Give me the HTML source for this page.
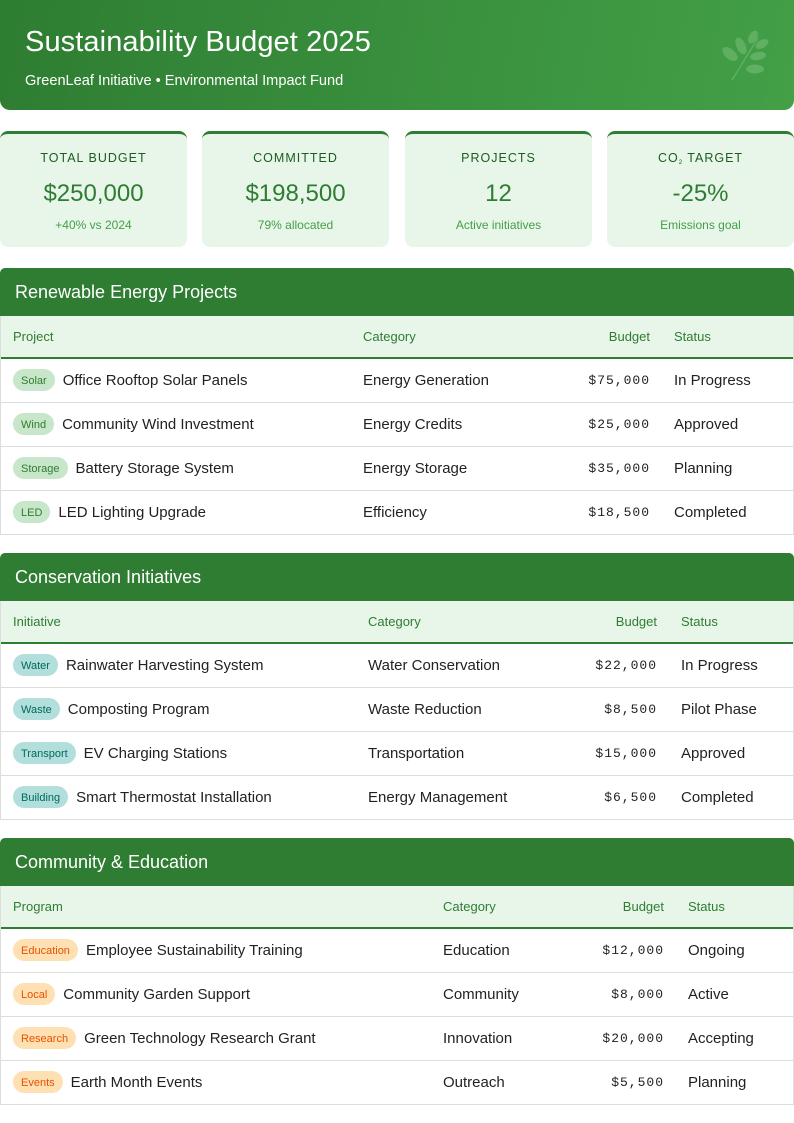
<!DOCTYPE html>
<html><head><meta charset="utf-8"><style>
*{box-sizing:border-box;margin:0;padding:0}
body{width:794px;height:1123px;background:#fff;font-family:"Liberation Sans",sans-serif;color:#222;position:relative;overflow:hidden}
.hdr{position:absolute;left:0;top:0;width:794px;height:110px;background:linear-gradient(100deg,#2e7d32,#43a047);border-radius:0 0 10px 10px;color:#fff}
.hdr h1{position:absolute;left:25px;top:26px;font-size:29px;font-weight:normal;letter-spacing:0.1px}
.hdr p{position:absolute;left:25px;top:73px;font-size:14.6px}
.leaf{position:absolute;left:718px;top:26px;opacity:.3}
.card{position:absolute;top:131px;width:187px;height:116px;background:#e8f5e9;border-top:3px solid #2e7d32;border-radius:8px;text-align:center}
.card .l{margin-top:16px;height:16px;font-size:12.5px;letter-spacing:1px;color:#1b5e20;line-height:16px}
.card .l sub{font-size:6px;line-height:0;vertical-align:-2px}
.card .v{margin-top:14px;font-size:24px;line-height:28px;color:#2e7d32}
.card .s{margin-top:10px;font-size:12px;color:#43a047}
.sec{position:absolute;left:0;width:794px;border:1px solid #ddd;border-top:none;border-radius:6px 6px 0 0}
.sh{height:48px;background:#2e7d32;color:#fff;font-size:18px;padding:14px 15px 0;border-radius:5px 5px 0 0;margin:0 -1px}
table{width:100%;border-collapse:collapse;table-layout:fixed}
th{height:42px;background:#e8f5e9;color:#2e7d32;font-weight:normal;font-size:13px;text-align:left;border-bottom:2px solid #2e7d32;padding:0 12px}
td{height:44px;font-size:15px;padding:0 12px;border-bottom:1px solid #ddd}
tr:last-child td{border-bottom:none}
.r{text-align:right}
td.r{font-family:"Liberation Mono",monospace;font-size:13px;letter-spacing:1px}
.f{display:flex;align-items:center;white-space:nowrap}
.b{display:inline-block;height:22px;line-height:25px;padding:0 8px;border-radius:11px;font-size:11px;margin-right:8px}
.g{background:#c8e6c9;color:#2e7d32}.t{background:#b2dfdb;color:#00695c}.o{background:#ffe0b2;color:#e65100}
</style></head><body>
<div class="hdr"><h1>Sustainability Budget 2025</h1><p>GreenLeaf Initiative • Environmental Impact Fund</p>
<svg class="leaf" width="56" height="56" viewBox="0 0 56 56"><path d="M14 54 L40 12" stroke="#a5d6a7" stroke-width="1.5" fill="none"/><g fill="#a5d6a7"><ellipse cx="12" cy="28" rx="9" ry="5" transform="rotate(40 12 28)"/><ellipse cx="23" cy="20" rx="9" ry="4.5" transform="rotate(65 23 20)"/><ellipse cx="35" cy="11" rx="7" ry="4" transform="rotate(-60 35 11)"/><ellipse cx="44" cy="18" rx="7" ry="4" transform="rotate(-30 44 18)"/><ellipse cx="40" cy="30" rx="8" ry="4" transform="rotate(-10 40 30)"/><ellipse cx="37" cy="43" rx="9" ry="4.5"/></g></svg></div>
<div class="card" style="left:0"><div class="l">TOTAL BUDGET</div><div class="v">$250,000</div><div class="s">+40% vs 2024</div></div>
<div class="card" style="left:202px"><div class="l">COMMITTED</div><div class="v">$198,500</div><div class="s">79% allocated</div></div>
<div class="card" style="left:405px"><div class="l">PROJECTS</div><div class="v">12</div><div class="s">Active initiatives</div></div>
<div class="card" style="left:607px"><div class="l">CO<sub>2</sub> TARGET</div><div class="v">-25%</div><div class="s">Emissions goal</div></div>

<div class="sec" style="top:268px"><div class="sh">Renewable Energy Projects</div>
<table><colgroup><col style="width:350px"><col style="width:210px"><col style="width:101px"><col></colgroup>
<tr><th>Project</th><th>Category</th><th class="r">Budget</th><th>Status</th></tr>
<tr><td><div class="f"><span class="b g">Solar</span>Office Rooftop Solar Panels</div></td><td>Energy Generation</td><td class="r">$75,000</td><td>In Progress</td></tr>
<tr><td><div class="f"><span class="b g">Wind</span>Community Wind Investment</div></td><td>Energy Credits</td><td class="r">$25,000</td><td>Approved</td></tr>
<tr><td><div class="f"><span class="b g">Storage</span>Battery Storage System</div></td><td>Energy Storage</td><td class="r">$35,000</td><td>Planning</td></tr>
<tr><td><div class="f"><span class="b g">LED</span>LED Lighting Upgrade</div></td><td>Efficiency</td><td class="r">$18,500</td><td>Completed</td></tr>
</table></div>

<div class="sec" style="top:553px"><div class="sh">Conservation Initiatives</div>
<table><colgroup><col style="width:355px"><col style="width:210px"><col style="width:103px"><col></colgroup>
<tr><th>Initiative</th><th>Category</th><th class="r">Budget</th><th>Status</th></tr>
<tr><td><div class="f"><span class="b t">Water</span>Rainwater Harvesting System</div></td><td>Water Conservation</td><td class="r">$22,000</td><td>In Progress</td></tr>
<tr><td><div class="f"><span class="b t">Waste</span>Composting Program</div></td><td>Waste Reduction</td><td class="r">$8,500</td><td>Pilot Phase</td></tr>
<tr><td><div class="f"><span class="b t">Transport</span>EV Charging Stations</div></td><td>Transportation</td><td class="r">$15,000</td><td>Approved</td></tr>
<tr><td><div class="f"><span class="b t">Building</span>Smart Thermostat Installation</div></td><td>Energy Management</td><td class="r">$6,500</td><td>Completed</td></tr>
</table></div>

<div class="sec" style="top:838px"><div class="sh">Community &amp; Education</div>
<table><colgroup><col style="width:430px"><col style="width:140px"><col style="width:105px"><col></colgroup>
<tr><th>Program</th><th>Category</th><th class="r">Budget</th><th>Status</th></tr>
<tr><td><div class="f"><span class="b o">Education</span>Employee Sustainability Training</div></td><td>Education</td><td class="r">$12,000</td><td>Ongoing</td></tr>
<tr><td><div class="f"><span class="b o">Local</span>Community Garden Support</div></td><td>Community</td><td class="r">$8,000</td><td>Active</td></tr>
<tr><td><div class="f"><span class="b o">Research</span>Green Technology Research Grant</div></td><td>Innovation</td><td class="r">$20,000</td><td>Accepting</td></tr>
<tr><td><div class="f"><span class="b o">Events</span>Earth Month Events</div></td><td>Outreach</td><td class="r">$5,500</td><td>Planning</td></tr>
</table></div>
</body></html>
